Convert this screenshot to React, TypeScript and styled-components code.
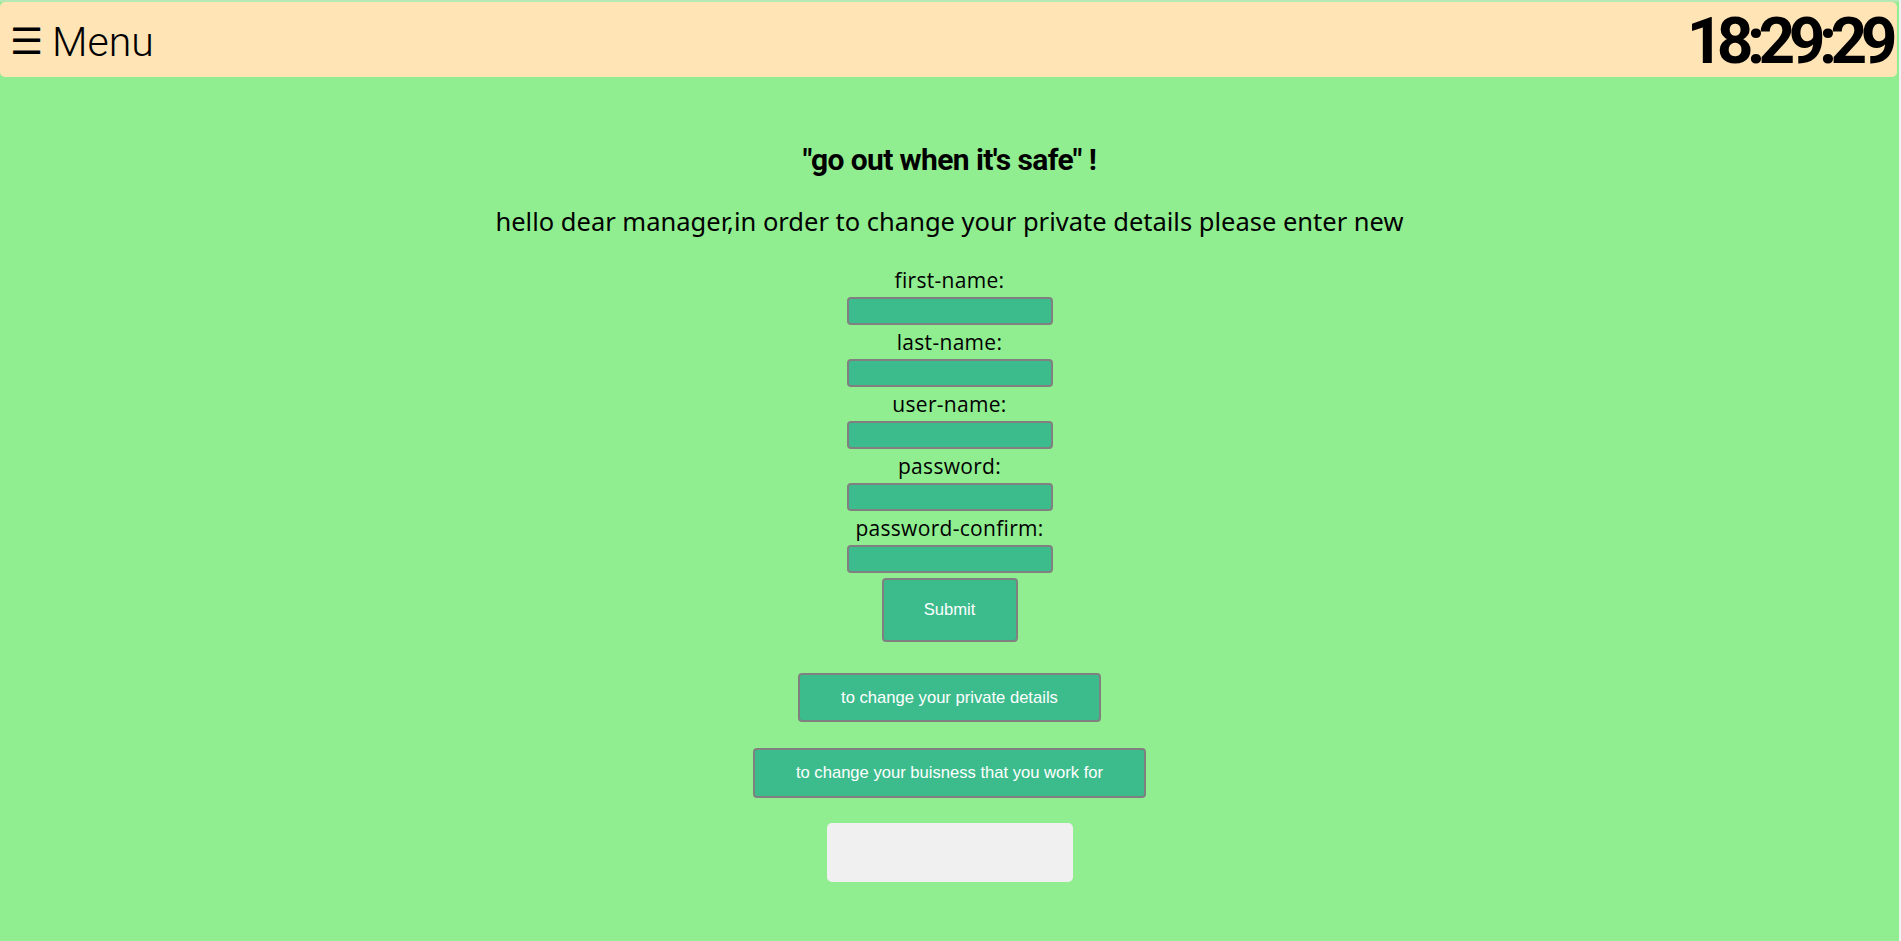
import React, { useEffect, useState } from 'react';
import styled, { createGlobalStyle } from 'styled-components';

const GlobalStyle = createGlobalStyle`
    html, body {
        margin: 0;
        padding: 0;
        background: #eef3ee;
    }
    * {
        box-sizing: border-box;
    }
`;

const fields = ['first-name:', 'last-name:', 'user-name:', 'password:', 'password-confirm:'];

const App = () => {
    const [time] = useState('18:29:29');

    useEffect(() => {
        // clock is frozen to match the screenshot
    }, []);

    return (
        <Page>
            <GlobalStyle />
            <TopStrip />
            <Header>
                <MenuButton type="button">
                    <Burger>☰</Burger>
                    Menu
                </MenuButton>
                <Clock>{time}</Clock>
            </Header>
            <Main>
                <Title>"go out when it's safe" !</Title>
                <Intro>hello dear manager,in order to change your private details please enter new</Intro>
                <Form onSubmit={(e) => e.preventDefault()}>
                    {fields.map((label) => (
                        <Field key={label}>
                            <Label>{label}</Label>
                            <Input type={label.startsWith('password') ? 'password' : 'text'} />
                        </Field>
                    ))}
                    <SubmitButton type="submit">Submit</SubmitButton>
                </Form>
                <NavButton type="button" $width={303} $top={31} $height={49}>
                    to change your private details
                </NavButton>
                <NavButton type="button" $width={393} $top={26} $height={50}>
                    to change your buisness that you work for
                </NavButton>
                <EmptyBox />
            </Main>
        </Page>
    );
};

const Page = styled.div`
    width: calc(100% - 2px);
    min-height: 100vh;
    background: #90ee90;
    display: flex;
    flex-direction: column;
`;

const TopStrip = styled.div`
    height: 2px;
    background: #b5e8b5;
`;

const Header = styled.header`
    display: flex;
    align-items: center;
    justify-content: space-between;
    height: 75px;
    margin-right: 2px;
    padding: 4px 6px 0 10px;
    border-radius: 5px;
    background: #ffe4b5;
`;

const MenuButton = styled.button`
    display: flex;
    align-items: center;
    gap: 9px;
    padding: 0;
    border: none;
    background: none;
    color: #000;
    font-family: Roboto, 'Noto Sans', sans-serif;
    font-size: 41px;
    font-weight: 300;
    cursor: pointer;
`;

const Burger = styled.span`
    font-family: 'DejaVu Sans', sans-serif;
    font-size: 37px;
`;

const Clock = styled.div`
    font-family: Roboto, 'Noto Sans', sans-serif;
    font-size: 64px;
    font-weight: 700;
    letter-spacing: -6.5px;
    color: #000;
`;

const Main = styled.main`
    display: flex;
    flex-direction: column;
    align-items: center;
    padding-bottom: 60px;
`;

const Title = styled.h2`
    margin: 67px 0 0;
    font-family: Roboto, 'Noto Sans', sans-serif;
    font-size: 30px;
    line-height: 32px;
    font-weight: 700;
    letter-spacing: -0.6px;
    color: #000;
`;

const Intro = styled.p`
    margin: 30px 0 0;
    font-family: 'Noto Sans', sans-serif;
    font-size: 25.5px;
    line-height: 30px;
    color: #000;
`;

const Form = styled.form`
    display: flex;
    flex-direction: column;
    align-items: center;
    margin-top: 32px;
`;

const Field = styled.div`
    display: flex;
    flex-direction: column;
    align-items: center;
    gap: 5px;
    margin-bottom: 5px;
`;

const Label = styled.label`
    font-family: 'Open Sans', sans-serif;
    font-size: 21px;
    line-height: 24px;
    letter-spacing: 0.3px;
    color: #000;
`;

const Input = styled.input`
    width: 206px;
    height: 28px;
    border: 2px solid #808080;
    border-radius: 4px;
    background: #3cbc8d;
    outline: none;
`;

const SubmitButton = styled.button`
    width: 136px;
    height: 64px;
    margin-top: 0;
    border: 2px solid #808080;
    border-radius: 4px;
    background: #3cbc8d;
    color: #fff;
    font-family: 'Liberation Sans', Arial, sans-serif;
    font-size: 16.6px;
    cursor: pointer;
`;

const NavButton = styled.button<{ $width: number; $top: number; $height: number }>`
    width: ${(p) => p.$width}px;
    height: ${(p) => p.$height}px;
    margin-top: ${(p) => p.$top}px;
    border: 2px solid #808080;
    border-radius: 4px;
    background: #3cbc8d;
    color: #fff;
    font-family: 'Liberation Sans', Arial, sans-serif;
    font-size: 16.6px;
    cursor: pointer;
`;

const EmptyBox = styled.div`
    width: 246px;
    height: 59px;
    margin-top: 25px;
    border-radius: 5px;
    background: #f0f0f0;
`;

export default App;
